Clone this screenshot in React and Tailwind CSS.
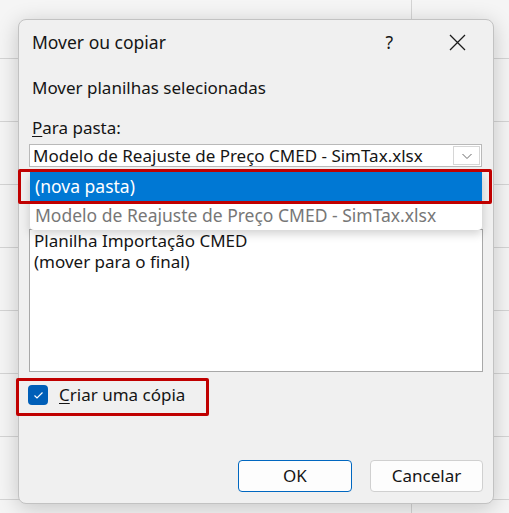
import React from "react";

const GridBackdrop = () => (
  <svg className="absolute inset-0" width="509" height="513">
    <rect width="509" height="513" fill="#f5f5f5" />
    {[58, 121, 184, 247, 310, 373, 436, 499].map((y) => (
      <line key={y} x1="0" x2="509" y1={y + 0.5} y2={y + 0.5} stroke="#d4d4d4" />
    ))}
    <line x1="411.5" x2="411.5" y1="0" y2="513" stroke="#d4d4d4" />
  </svg>
);

const Chevron = () => (
  <svg width="12" height="8" viewBox="0 0 12 8">
    <polyline points="1.5,2 6,6.5 10.5,2" fill="none" stroke="#6a6a6a" strokeWidth="1" />
  </svg>
);

export default function App() {
  return (
    <div className="relative w-[509px] h-[513px] overflow-hidden pt-[19px] pl-[18px] font-['Noto_Sans',sans-serif] text-[#151515]">
      <GridBackdrop />

      <div className="relative z-10 w-[476px] h-[485px] rounded-[8px] border border-[#c2c2c2] bg-[#f0f0f0] shadow-[0_4px_22px_rgba(0,0,0,0.2)] flex flex-col">
        {/* titulo */}
        <div className="h-[44px] flex items-center pl-[13px] pr-[27px]">
          <span className="text-[17.5px]">Mover ou copiar</span>
          <span className="ml-auto text-[17.5px]">?</span>
          <svg className="ml-[56px]" width="17" height="17" viewBox="0 0 17 17">
            <path d="M1 1L16 16M16 1L1 16" stroke="#1b1b1b" strokeWidth="1.3" />
          </svg>
        </div>

        <div className="mt-[14px] pl-[13px] h-[20px] leading-[20px] text-[17px]">Mover planilhas selecionadas</div>

        <div className="mt-[20px] pl-[13px] h-[20px] leading-[20px] text-[17px]">
          <span className="underline underline-offset-2">P</span>ara pasta:
        </div>

        {/* select */}
        <div className="relative mt-[6px] ml-[10px] w-[453px] h-[23px] bg-white border border-[#b9b9b9] flex items-center pl-[3px]">
          <span className="text-[17px] leading-[20px] whitespace-nowrap">Modelo de Reajuste de Preço CMED - SimTax.xlsx</span>
          <div className="ml-auto mr-[1px] w-[27px] h-[19px] border border-[#d6d6d6] flex items-center justify-center shrink-0">
            <Chevron />
          </div>

          {/* lista aberta */}
          <div className="absolute left-0 top-[27px] w-[452px] bg-white rounded-b-[4px] shadow-[0_4px_10px_rgba(0,0,0,0.18)] z-20 overflow-hidden">
            <div className="h-[29px] bg-[#0078d4] text-white text-[17.5px] flex items-center pl-[5px]">(nova pasta)</div>
            <div className="h-[29px] text-[#777777] text-[17.5px] flex items-center pl-[5px] whitespace-nowrap">Modelo de Reajuste de Preço CMED - SimTax.xlsx</div>
          </div>
        </div>

        {/* lista de planilhas */}
        <div className="mt-[62px] ml-[10px] w-[454px] h-[143px] bg-white border border-[#a8a8a8] pl-[4px] text-[17px] leading-[21px]">
          <div>Planilha Importação CMED</div>
          <div>(mover para o final)</div>
        </div>

        {/* checkbox */}
        <div className="mt-[13px] ml-[9px] flex items-center gap-[11px] h-[20px]">
          <div className="w-[20px] h-[20px] rounded-[4px] bg-[#005fb8] flex items-center justify-center">
            <svg width="11" height="9" viewBox="0 0 11 9">
              <polyline points="1.5,4.5 4,7 9.5,1.5" fill="none" stroke="white" strokeWidth="1.2" />
            </svg>
          </div>
          <span className="text-[17px] leading-[20px]">
            <span className="underline underline-offset-2">C</span>riar uma cópia
          </span>
        </div>

        {/* botoes */}
        <div className="mt-[55px] flex justify-end gap-[18px] pr-[10px]">
          <button className="w-[114px] h-[32px] rounded-[4px] border border-[#0067c0] bg-[#fdfdfd] text-[17px]">OK</button>
          <button className="w-[113px] h-[32px] rounded-[4px] border border-[#d0d0d0] bg-[#fdfdfd] text-[17px]">Cancelar</button>
        </div>
      </div>

      {/* marcacoes vermelhas */}
      <div className="absolute z-30 left-[18px] top-[169px] w-[474px] h-[35px] border-[3px] border-[#c00000] rounded-[2px]" />
      <div className="absolute z-30 left-[16px] top-[378px] w-[193px] h-[38px] border-[3px] border-[#c00000] rounded-[2px]" />
    </div>
  );
}
